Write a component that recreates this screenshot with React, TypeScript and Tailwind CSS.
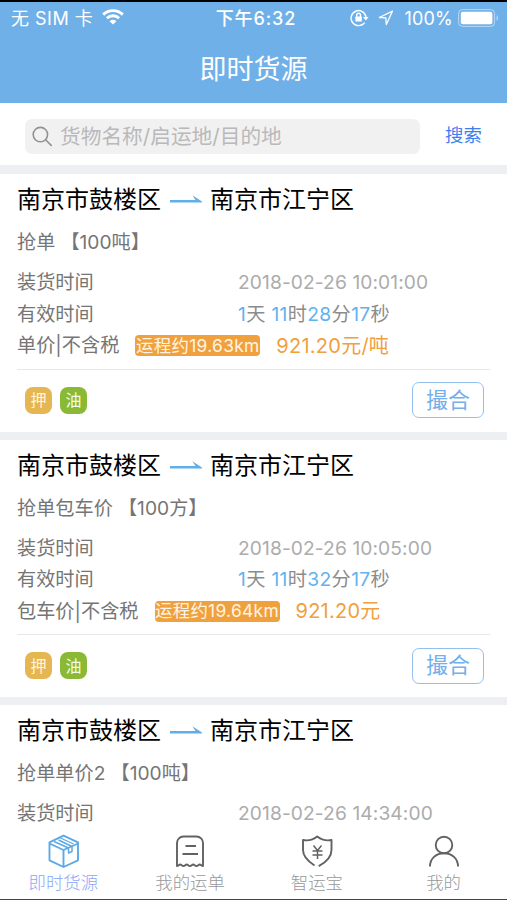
import type { ReactNode } from 'react';

type Order = {
  from: string;
  to: string;
  kind: string;
  amount: string;
  loadTime: string;
  offer?: {
    minutes: string;
    priceLabel: string;
    distance: string;
    price: string;
  };
};

const orders: Order[] = [
  {
    from: '南京市鼓楼区',
    to: '南京市江宁区',
    kind: '抢单',
    amount: '【100吨】',
    loadTime: '2018-02-26 10:01:00',
    offer: { minutes: '28', priceLabel: '单价|不含税', distance: '运程约19.63km', price: '921.20元/吨' },
  },
  {
    from: '南京市鼓楼区',
    to: '南京市江宁区',
    kind: '抢单包车价',
    amount: '【100方】',
    loadTime: '2018-02-26 10:05:00',
    offer: { minutes: '32', priceLabel: '包车价|不含税', distance: '运程约19.64km', price: '921.20元' },
  },
  {
    from: '南京市鼓楼区',
    to: '南京市江宁区',
    kind: '抢单单价2',
    amount: '【100吨】',
    loadTime: '2018-02-26 14:34:00',
  },
];

function StatusBar() {
  return (
    <div className="flex h-[33px] items-center justify-between pr-[9px] pl-[11px] text-[18px]">
      <div className="flex w-[150px] items-center gap-[9px] whitespace-nowrap">
        <span className="tracking-[0.5px]">无 SIM 卡</span>
        <svg className="mb-[3px]" width="22" height="16" viewBox="0 0 22 16" fill="none" stroke="currentColor" strokeWidth="2.9">
          <path d="M1.2 5.6a14 14 0 0 1 19.6 0" />
          <path d="M4.9 9.3a8.7 8.7 0 0 1 12.2 0" />
          <path d="M11 15.6 7.6 12.2a4.9 4.9 0 0 1 6.8 0z" fill="currentColor" stroke="none" />
        </svg>
      </div>
      <div className="pl-[3px] text-center font-medium tracking-[0.9px] whitespace-nowrap">下午6:32</div>
      <div className="flex w-[150px] items-center justify-end whitespace-nowrap">
        <svg className="mr-[9px] mb-[2px] shrink-0" width="19" height="18" viewBox="0 0 19 18" fill="none" stroke="currentColor" strokeWidth="1.4">
          <path d="M14.6 13.6A7.5 7.5 0 1 1 16 8" />
          <path d="M13 8h5.6l-2.8 3.6z" fill="currentColor" stroke="none" />
          <rect x="5.4" y="7.6" width="6.4" height="5" rx=".6" fill="currentColor" stroke="none" />
          <path d="M6.7 8V6.2a1.9 1.9 0 0 1 3.8 0V8" />
        </svg>
        <svg className="mr-[10px] mb-[2px] shrink-0" width="16" height="16" viewBox="0 0 16 16" fill="none" stroke="currentColor" strokeWidth="1.3" strokeLinejoin="round">
          <path d="M14.4 1.2 1.4 7.5l6.4.4.5 6.6z" />
        </svg>
        <span className="tracking-[0.2px]">100%</span>
        <svg className="mr-[-1px] mb-[2px] ml-[5px] shrink-0" width="41" height="18" viewBox="0 0 41 18">
          <rect x=".6" y=".6" width="36" height="16.8" rx="4" fill="none" stroke="currentColor" strokeOpacity=".5" />
          <rect x="2.8" y="2.8" width="31.6" height="12.4" rx="2" fill="currentColor" />
          <path d="M38.6 6.2c2 1 2 4.6 0 5.6z" fill="currentColor" fillOpacity=".5" />
        </svg>
      </div>
    </div>
  );
}

function SearchBar() {
  return (
    <div className="flex h-[62px] shrink-0 items-center bg-white pt-1 pl-[25px]">
      <div className="flex h-[35px] w-[395px] items-center rounded-[7px] bg-[#f1f1f1] pl-[7px] text-[20.7px] text-[#b9b9bb]">
        <svg className="mr-[7px]" width="21" height="21" viewBox="0 0 21 21" fill="none" stroke="#929292" strokeWidth="1.6" strokeLinecap="round">
          <circle cx="8.4" cy="8.6" r="7.2" />
          <path d="m13.6 13.8 5.6 5.6" />
        </svg>
        <span className="pt-px whitespace-nowrap">货物名称/启运地/目的地</span>
      </div>
      <button className="ml-[25px] text-[18.4px] text-[#3d7ff0]">搜索</button>
    </div>
  );
}

function Row({ label, children }: { label: string; children: ReactNode }) {
  return (
    <div className="flex h-[31.5px] items-center whitespace-nowrap">
      <span className="w-[221px] shrink-0">{label}</span>
      {children}
    </div>
  );
}

function Offer({ offer }: { offer: NonNullable<Order['offer']> }) {
  return (
    <>
      <Row label="有效时间">
        <span className="tracking-[0.35px] text-[#8c8c8c]">
          <b className="font-normal text-[#62b2ee]">1</b>天 <b className="font-normal text-[#62b2ee]">11</b>时
          <b className="font-normal text-[#62b2ee]">{offer.minutes}</b>分
          <b className="font-normal text-[#62b2ee]">17</b>秒
        </span>
      </Row>
      <div className="flex h-[31.5px] items-center whitespace-nowrap">
        <span>{offer.priceLabel}</span>
        <span className="ml-4 flex h-[21px] w-[125px] items-center justify-center rounded-[4px] bg-[#f0a03c] text-[17.4px] tracking-[0.3px] text-[#fff4e2]">
          {offer.distance}
        </span>
        <span className="ml-4 text-[20px] tracking-[0.25px] text-[#f0a03c]">{offer.price}</span>
      </div>
    </>
  );
}

function OrderCard({ order }: { order: Order }) {
  return (
    <article className="h-[257.5px] shrink-0 bg-white px-[17px] text-[19.2px] text-[#757575]">
      <h2 className="flex h-[50px] items-center pt-[2px] text-[24px] whitespace-nowrap text-black">
        {order.from}
        <svg className="mr-2 ml-[9px]" width="32" height="12" viewBox="0 0 32 12" fill="none">
          <path d="M0 6h25.500L22.400 1.200 32 7.500v1H0z" fill="#62aee9" />
        </svg>
        {order.to}
      </h2>
      <p className="flex h-9 items-center pt-px whitespace-nowrap">
        {order.kind}
        <span className="ml-[5px]">{order.amount}</span>
      </p>
      <div className={order.offer ? 'border-b border-[#e8e8e8] pt-[7px] pb-[7px]' : 'pt-[7px]'}>
        <Row label="装货时间">
          <span className="tracking-[0.1px] text-[#acacac]">{order.loadTime}</span>
        </Row>
        {order.offer && <Offer offer={order.offer} />}
      </div>
      {order.offer && (
        <div className="flex h-[61px] items-center gap-2 pl-2">
          <span className="grid h-[27px] w-[27px] place-items-center rounded-[8px] bg-[#e5b652] text-[16px] text-[#fff6df]">押</span>
          <span className="grid h-[27px] w-[27px] place-items-center rounded-[8px] bg-[#8ab935] text-[16px] text-[#f6fbe9]">油</span>
          <button className="mr-[6px] ml-auto h-[36px] w-[72px] rounded-[7px] border border-[#92bfee] text-[22px] text-[#75b0ea]">撮合</button>
        </div>
      )}
    </article>
  );
}

function Tab({ label, active, children }: { label: string; active?: boolean; children: ReactNode }) {
  return (
    <a className={active ? 'flex flex-col items-center text-[#8ba6f7]' : 'flex flex-col items-center text-[#999999]'}>
      <svg
        className={active ? 'text-[#5ba9e6]' : 'text-[#626262]'}
        width="34"
        height="36"
        viewBox="0 0 34 36"
        fill="none"
        stroke="currentColor"
        strokeWidth="1.9"
        strokeLinejoin="round"
      >
        {children}
      </svg>
      <span className="mt-px text-[17.4px] leading-[26px] font-light">{label}</span>
    </a>
  );
}

function TabBar() {
  return (
    <nav className="grid h-[67px] shrink-0 grid-cols-4 border-b border-[#444] bg-white">
      <Tab label="即时货源" active>
        <path d="M17.500 2.700 32 9.300v18L17.500 34 3.500 27.300v-18zM3.500 10.500l14 6.500L32 10.500M17.500 17v17" />
        <path d="m8 8.500 14.500 6.500v5l3.500-1.500v-5L12.500 7" strokeWidth="1.500" />
        <path d="m13.500 4.500 14 6.500" strokeWidth="1.300" />
      </Tab>
      <Tab label="我的运单">
        <path d="M4 33V10a6.500 6.500 0 0 1 6.500-6.500h13A6.500 6.500 0 0 1 30 10v23c-1.500 0-2-1.500-3.300-1.500S25 33 23.500 33s-2-1.500-3.300-1.500S18.500 33 17 33s-2-1.500-3.300-1.500S12 33 10.500 33s-2-1.500-3.300-1.500S5.500 33 4 33z" />
        <path d="M12.500 13h10.500M9.500 21h15.500" />
      </Tab>
      <Tab label="智运宝">
        <path d="M14.500 32.500C7.500 28 3 23.500 3 17V7c5.500 1 10 0 14.200-3.500C21.500 7 26 8 31.500 7v10c0 6.500-5 12-12.800 16.200" />
        <path d="m13.500 12.500 4 5 4-5M17.500 17.500V26M12.500 18h10M12.500 22h10" strokeWidth="1.500" />
      </Tab>
      <Tab label="我的">
        <circle cx="17" cy="12" r="8.300" />
        <path d="M3 33.500c0-8 6-13.200 14-13.200s14 5.200 14 13.200" />
      </Tab>
    </nav>
  );
}

export default function App() {
  return (
    <div className="flex h-[900px] w-[507px] flex-col overflow-hidden bg-[#eeeff2] font-['Inter','Noto_Sans_CJK_SC',sans-serif]">
      <header className="h-[103px] shrink-0 border-t-2 border-black bg-[#70b0e9] text-white">
        <StatusBar />
        <h1 className="flex h-[70px] items-center justify-center text-[27px]">即时货源</h1>
      </header>
      <SearchBar />
      <main className="flex min-h-0 flex-1 flex-col gap-2 overflow-hidden pt-[9px]">
        {orders.map((order) => (
          <OrderCard key={order.loadTime} order={order} />
        ))}
      </main>
      <TabBar />
    </div>
  );
}
